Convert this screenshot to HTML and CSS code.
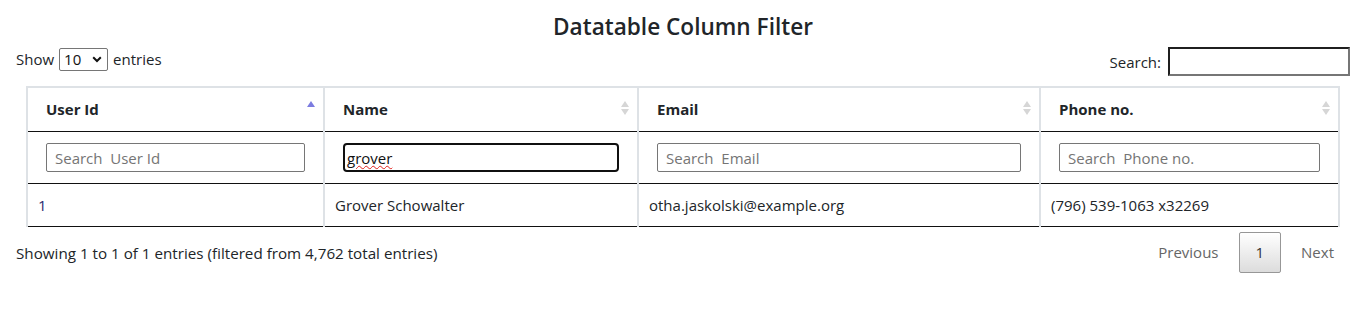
FILE: index.html
```html
<!DOCTYPE html>
<html lang="en">
<head>
<meta charset="utf-8">
<title>Datatable Column Filter</title>
<link rel="stylesheet" href="styles.css">
</head>
<body>
<div class="page">
  <h4 class="title">Datatable Column Filter</h4>
  <div class="wrapper">
    <div class="toolbar">
      <label class="length">Show
        <span class="select"><span class="select-val">10</span><svg class="chev" width="10" height="7" viewBox="0 0 10 7"><path d="M1.2 1.3 L5 5 L8.8 1.3" fill="none" stroke="#111" stroke-width="2"/></svg></span>
        entries</label>
      <label class="search">Search: <input class="search-input" type="text"></label>
    </div>
    <table class="grid">
      <colgroup>
        <col class="c1"><col class="c2"><col class="c3"><col class="c4">
      </colgroup>
      <thead>
        <tr class="head-row">
          <th><div class="th-in"><span>User Id</span><span class="sort"><span class="up active"></span><span class="down hidden"></span></span></div></th>
          <th><div class="th-in"><span>Name</span><span class="sort"><span class="up"></span><span class="down"></span></span></div></th>
          <th><div class="th-in"><span>Email</span><span class="sort"><span class="up"></span><span class="down"></span></span></div></th>
          <th><div class="th-in"><span>Phone no.</span><span class="sort"><span class="up"></span><span class="down"></span></span></div></th>
        </tr>
        <tr class="filter-row">
          <th><input class="filter" type="text" placeholder="Search  User Id"></th>
          <th><div class="filter focused" role="textbox"><span class="typed">grover</span></div></th>
          <th><input class="filter" type="text" placeholder="Search  Email"></th>
          <th><input class="filter" type="text" placeholder="Search  Phone no."></th>
        </tr>
      </thead>
      <tbody>
        <tr>
          <td class="id">1</td>
          <td>Grover Schowalter</td>
          <td>otha.jaskolski@example.org</td>
          <td>(796) 539-1063 x32269</td>
        </tr>
      </tbody>
    </table>
    <div class="footer">
      <div class="info">Showing 1 to 1 of 1 entries (filtered from 4,762 total entries)</div>
      <div class="paginate">
        <span class="pbtn disabled">Previous</span>
        <span class="pbtn current">1</span>
        <span class="pbtn disabled">Next</span>
      </div>
    </div>
  </div>
</div>
</body>
</html>
```

FILE: styles.css
```css
* { box-sizing: border-box; }
html, body { margin: 0; padding: 0; background: #fff; }
body {
  font-family: "Open Sans", "Noto Sans", sans-serif;
  font-size: 15px;
  color: #212529;
}
.title {
  margin: 0;
  padding: 12px 0 0 9px;
  text-align: center;
  font-size: 22.6px;
  font-weight: 600;
  line-height: 30px;
  color: #212529;
}
.wrapper {
  margin: 0 7px 0 16px;
}
.toolbar {
  display: flex;
  justify-content: space-between;
  align-items: flex-start;
  height: 44px;
  padding-top: 5px;
}
.length {
  display: flex;
  align-items: center;
  gap: 5px;
  padding-top: 1px;
  line-height: 23px;
}
.select {
  display: inline-flex;
  align-items: center;
  justify-content: space-between;
  width: 49px;
  height: 23px;
  padding: 0 5px 0 4px;
  border: 1px solid #767676;
  border-radius: 2px;
  font-size: 15px;
  color: #111;
}
.search {
  display: flex;
  align-items: center;
  gap: 7px;
}
.search-input {
  width: 182px;
  height: 29px;
  border: 2px solid #767676;
  border-top-color: #1f1f1f;
  border-left-color: #1f1f1f;
  background: #fff;
  padding: 1px 2px;
  font: inherit;
}
.grid {
  width: calc(100% - 20px);
  margin: 0 0 0 10px;
  border-collapse: collapse;
  border: 2px solid #dee2e6;
  border-bottom: none;
  table-layout: fixed;
}
.c1 { width: 297px; }
.c2 { width: 314px; }
.c3 { width: 402px; }
.c4 { width: auto; }
.grid th, .grid td {
  border-left: 2px solid #dee2e6;
  border-right: 2px solid #dee2e6;
  border-bottom: 1px solid #111;
  text-align: left;
  vertical-align: middle;
}
.head-row th {
  padding: 10px 8px 10px 18px;
  font-weight: 700;
  line-height: 23px;
  font-size: 15px;
}
.th-in {
  display: flex;
  justify-content: space-between;
  align-items: center;
}
.sort {
  display: flex;
  flex-direction: column;
  gap: 2px;
  width: 8px;
  margin-top: -4px;
}
.sort .up, .sort .down {
  width: 0;
  height: 0;
  border-left: 4px solid transparent;
  border-right: 4px solid transparent;
}
.sort .up { border-bottom: 6px solid #d6d6d6; }
.sort .down { border-top: 6px solid #d6d6d6; }
.sort .up.active { border-bottom-color: #7c7ce0; }
.sort .down.hidden { visibility: hidden; }
.filter-row th {
  padding: 11px 18px;
  font-weight: 400;
}
.filter {
  display: block;
  width: 100%;
  height: 29px;
  border: 1px solid #767676;
  border-radius: 2px;
  padding: 1px 8px;
  font: inherit;
  color: #111;
  background: #fff;
}
.filter::placeholder { color: #757575; opacity: 1; }
.filter.focused {
  display: flex;
  align-items: center;
  border: 2px solid #101010;
  border-radius: 4px;
  padding: 0 2px;
  line-height: 20px;
}
.typed {
  text-decoration: underline wavy #e0201b;
  text-decoration-thickness: 1px;
  text-underline-offset: 1px;
}
.grid td {
  padding: 10px 10px;
  line-height: 22px;
}
.grid td.id { color: #2b2b6e; }
.footer {
  display: flex;
  justify-content: space-between;
  align-items: center;
  padding-top: 5px;
}
.info {
  line-height: 22px;
  font-size: 15.2px;
}
.paginate {
  display: flex;
  align-items: center;
}
.pbtn {
  display: inline-block;
  padding: 9px 15px;
  line-height: 21px;
  margin-left: 4px;
  border: 1px solid transparent;
  border-radius: 2px;
  color: #666;
}
.pbtn.current {
  color: #333;
  border-color: #979797;
  background: linear-gradient(to bottom, #ffffff 0%, #dcdcdc 100%);
  padding: 9px 16px;
}
```
